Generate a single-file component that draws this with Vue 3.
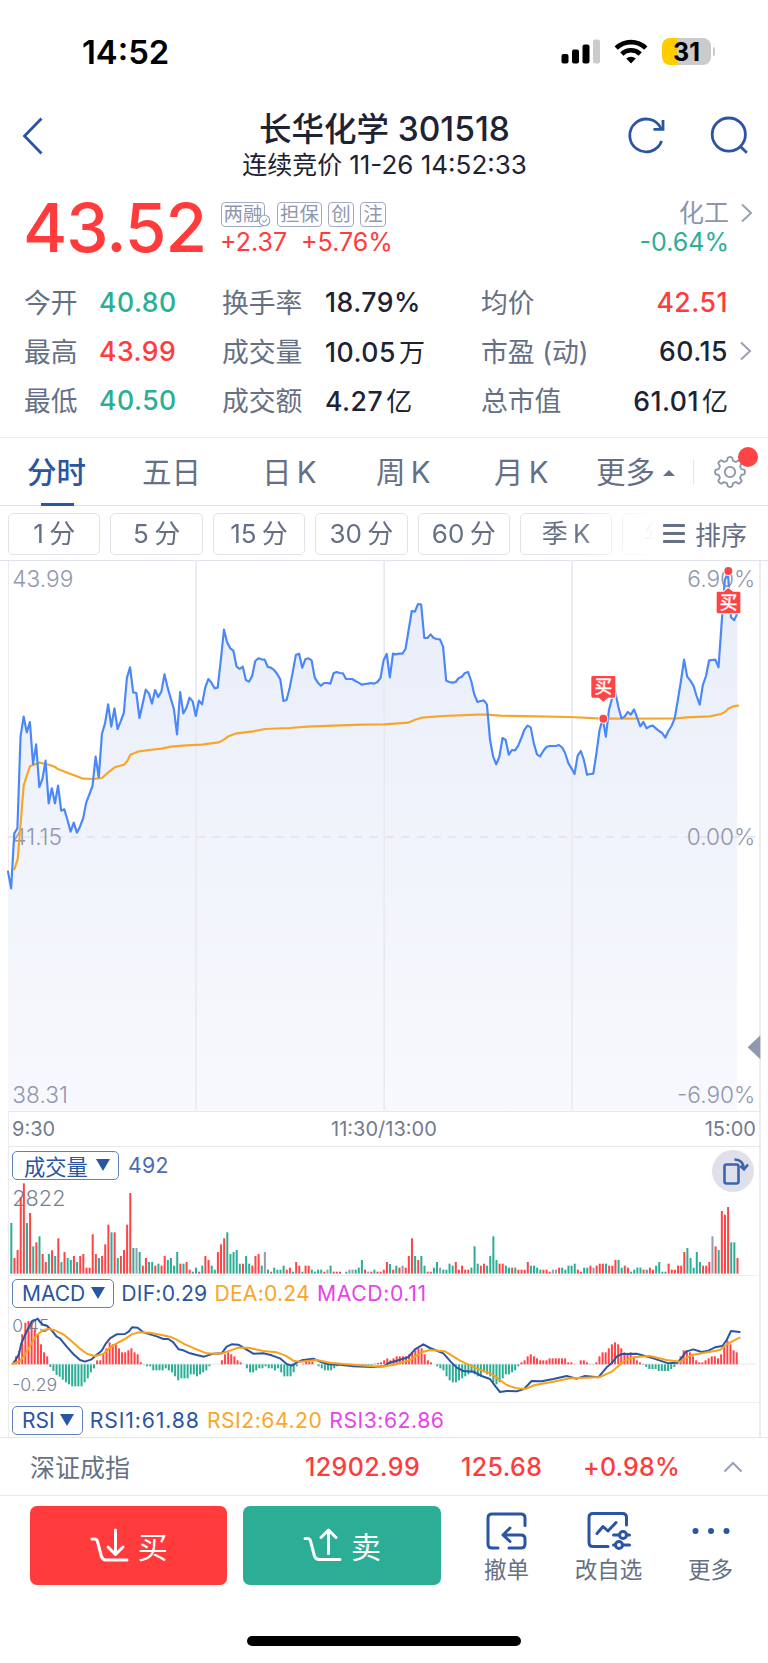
<template>
  <div class="page">
    <!-- status bar -->
    <div class="status">
      <span class="clock">14:52</span>
      <div class="status-icons">
        <svg width="40" height="26" viewBox="0 0 40 26">
          <rect x="0.5" y="15" width="7" height="9.5" rx="2" />
          <rect x="11" y="10.5" width="7" height="14" rx="2" />
          <rect x="21.5" y="5.5" width="7" height="19" rx="2" />
          <rect x="32" y="0.5" width="7" height="24" rx="2" fill="#cbcbcb" />
        </svg>
        <svg class="wifi" width="34" height="26" viewBox="0 0 34 26" fill="none" stroke="#000" stroke-width="4.6">
          <path d="M2.2 9.2 A21 21 0 0 1 31.8 9.2" />
          <path d="M7.8 15 A13.2 13.2 0 0 1 26.2 15" />
          <path d="M17 24.6 L12.2 19.6 A7 7 0 0 1 21.8 19.6 Z" fill="#000" stroke="none" />
        </svg>
        <div class="battery"><span class="battery-num">31</span></div>
        <i class="battery-tip"></i>
      </div>
    </div>

    <!-- title -->
    <header class="header">
      <svg class="back" width="22" height="38" viewBox="0 0 22 38"><path d="M19.5 1.5 L2.5 19 L19.5 36.5" /></svg>
      <div class="titles">
        <div class="title">长华化学 <span>301518</span></div>
        <div class="subtitle">连续竞价 <span>11-26 14:52:33</span></div>
      </div>
      <div class="header-actions">
        <svg width="40" height="40" viewBox="0 0 40 40">
          <path d="M34.6 25 A16.4 16.4 0 1 1 34 12.5" />
          <path d="M36 4 V13.3 H26.5" />
        </svg>
        <svg width="40" height="40" viewBox="0 0 40 40">
          <circle cx="18.8" cy="18.6" r="16.6" />
          <path d="M30.5 30.5 L36.8 36.8" />
        </svg>
      </div>
    </header>

    <!-- quote -->
    <section class="quote">
      <div class="price">43.52</div>
      <div class="quote-mid">
        <div class="tags">
          <span class="tag checked">两融
            <svg class="tick" width="13" height="13" viewBox="0 0 13 13"><circle cx="6.5" cy="6.5" r="5.3" /><path d="M4 6.4 L6 8.3 L9.2 5" /></svg>
          </span>
          <span class="tag wide">担保</span>
          <span class="tag">创</span>
          <span class="tag">注</span>
        </div>
        <div class="change up"><span>+2.37</span><span>+5.76%</span></div>
      </div>
      <div class="sector">
        <div class="sector-name">化工</div>
        <div class="sector-rate down">-0.64%</div>
      </div>
      <svg class="arrow sector-arrow" width="14" height="20" viewBox="0 0 14 20"><path d="M2 1.5 L11 10 L2 18.5" /></svg>
    </section>

    <section class="stats">
      <div class="stat-row" v-for="row in stats" :key="row[0].label">
        <template v-for="cell in row" :key="cell.label">
          <span class="label">{{ cell.label }}</span>
          <span class="value" :class="cell.tone">{{ cell.value }}<em v-if="cell.unit">{{ cell.unit }}</em></span>
        </template>
        <svg v-if="row[2].more" class="arrow" width="14" height="20" viewBox="0 0 14 20"><path d="M2 1.5 L11 10 L2 18.5" /></svg>
      </div>
    </section>

    <!-- period tabs -->
    <nav class="tabs">
      <span v-for="(tab, i) in tabs" :key="tab" class="tab" :class="{ active: i === 0 }">{{ tab }}</span>
      <span class="tab more">更多<i class="caret"></i></span>
      <i class="tab-sep"></i>
      <div class="gear">
        <svg width="36" height="36" viewBox="-18 -18 36 36"><path :d="gearPath" /><circle r="5.2" /></svg>
        <i class="dot"></i>
      </div>
    </nav>

    <div class="chips">
      <div class="chip-list">
        <span v-for="chip in chips" :key="chip" class="chip">{{ chip }}</span>
      </div>
      <div class="sort">
        <i class="burger"></i>
        <span>排序</span>
      </div>
    </div>

    <section class="charts">
      <!-- price, drawn at 3 units per pixel -->
      <svg class="plot" width="768" height="551" viewBox="0 0 2304 1653">
        <defs>
          <linearGradient id="area" x1="0" y1="0" x2="0" y2="1653" gradientUnits="userSpaceOnUse">
            <stop offset="0" stop-color="#e8edf9" />
            <stop offset="0.55" stop-color="#f1f4fb" />
            <stop offset="1" stop-color="#f8f9fe" />
          </linearGradient>
        </defs>
        <path :d="areaPath" fill="url(#area)" />
        <path class="grid-line" d="M588.5 0 V1650 M1152.5 0 V1650 M1716.5 0 V1650" />
        <path class="zero-dash" d="M24 831 H2268" />
        <g class="axis">
          <text x="37" y="81">43.99</text>
          <text x="37" y="855">41.15</text>
          <text x="37" y="1628">38.31</text>
          <text x="2266" y="81" text-anchor="end">6.90%</text>
          <text x="2266" y="855" text-anchor="end">0.00%</text>
          <text x="2266" y="1628" text-anchor="end">-6.90%</text>
        </g>
        <polyline :points="avgPoints" class="line avg" />
        <polyline :points="pricePoints" class="line price-line" />
        <g class="buy">
          <circle cx="1810" cy="476" r="12" />
          <path d="M1778 348 H1842 Q1846 348 1846 352 V409 Q1846 413 1842 413 H1824 L1810 425 L1796 413 H1778 Q1774 413 1774 409 V352 Q1774 348 1778 348 Z" />
          <text x="1810" y="400">买</text>
          <circle cx="2185" cy="33" r="12" />
          <path d="M2154 95 H2171 L2185 84 L2199 95 H2217 Q2221 95 2221 99 V156 Q2221 160 2217 160 H2154 Q2150 160 2150 156 V99 Q2150 95 2154 95 Z" />
          <text x="2186" y="147">买</text>
        </g>
        <path d="M2281 1426 V1498 L2243 1462 Z" fill="#8f99ab" />
      </svg>
      <div class="times"><span>9:30</span><span class="noon">11:30/13:00</span><span>15:00</span></div>

      <!-- volume -->
      <div class="ind-head volume-head">
        <span class="pill cn">成交量<i class="tri"></i></span>
        <span class="c-dif vol-now">492</span>
      </div>
      <svg class="plot" width="768" height="95" viewBox="0 300 2304 285">
        <text class="axis-dark" x="37" y="377">2822</text>
        <rect v-for="(bar, i) in volumeBars" :key="i" :x="bar.x" :y="581 - bar.h" width="6" :height="bar.h" :fill="bar.color" />
      </svg>

      <!-- macd -->
      <div class="ind-head macd-head">
        <span class="pill">MACD<i class="tri"></i></span>
        <span class="c-dif">DIF:0.29</span>
        <span class="c-dea">DEA:0.24</span>
        <span class="c-macd">MACD:0.11</span>
      </div>
      <svg class="plot" width="768" height="92" viewBox="0 690 2304 276">
        <path d="M24 852 H2268" stroke="#e6e8ee" stroke-width="3" />
        <rect v-for="(bar, i) in macdBars" :key="i" :x="bar.x" :y="bar.y" width="6" :height="bar.h" :fill="bar.color" />
        <text class="axis-dark small" x="37" y="757">0.45</text>
        <text class="axis-dark small" x="37" y="934">-0.29</text>
        <polyline :points="difPoints" class="line dif" />
        <polyline :points="deaPoints" class="line dea" />
      </svg>

      <div class="ind-head rsi-head">
        <span class="pill">RSI<i class="tri"></i></span>
        <span class="c-dif">RSI1:61.88</span>
        <span class="c-dea">RSI2:64.20</span>
        <span class="c-macd">RSI3:62.86</span>
      </div>

      <div class="rotate">
        <svg width="42" height="42" viewBox="0 0 42 42">
          <rect x="12.5" y="14.5" width="14" height="19" rx="2" />
          <path d="M22.5 9.5 C28 9.5 31.5 13 32 19 M28.3 16 L32 19.3 L36 14.5" />
        </svg>
      </div>
    </section>

    <!-- index ticker -->
    <div class="index-bar">
      <span class="index-name">深证成指</span>
      <span class="index-num">12902.99</span>
      <span class="index-diff">125.68</span>
      <span class="index-rate">+0.98%</span>
      <svg class="arrow" width="20" height="14" viewBox="0 0 20 14"><path d="M1.5 11.5 L10 3 L18.5 11.5" /></svg>
    </div>

    <!-- trade bar -->
    <footer class="trade">
      <div class="btn buy-btn">
        <svg width="40" height="36" viewBox="0 0 40 36"><path d="M2 11 H4.5 Q6.8 11 7.5 13.5 L11.3 28 Q12.5 32 16 32 H37" /><path d="M25.5 2 V26 M18 19 L25.5 26.5 L33 19" /></svg>
        <span>买</span>
      </div>
      <div class="btn sell-btn">
        <svg width="40" height="36" viewBox="0 0 40 36"><path d="M2 10.5 H4.5 Q6.8 10.5 7.5 13 L11.3 27.5 Q12.5 31.5 16 31.5 H37" /><path d="M25.5 25.5 V2.5 M18 9.5 L25.5 2 L33 9.5" /></svg>
        <span>卖</span>
      </div>
      <div class="tool cancel">
        <svg width="42" height="40" viewBox="0 0 42 40">
          <path d="M39 14.5 V7 Q39 3 35 3 H6 Q2 3 2 7 V33 Q2 37 6 37 H12" />
          <path d="M23 37 H35 Q39 37 39 33 V28 Q39 24 35 24 H18 M24 17 L17 24 L24 30.5" />
        </svg>
        <span>撤单</span>
      </div>
      <div class="tool watch">
        <svg width="46" height="40" viewBox="0 0 46 40">
          <path d="M40.5 14 V6.5 Q40.5 2.5 36.5 2.5 H7 Q3 2.5 3 6.5 V31.5 Q3 35.5 7 35.5 H22" />
          <path d="M11 22.5 L17 15.5 L22 20 L30 11.5" />
          <path d="M27.5 24 H33.5 M40.5 24 H43.5 M27.5 34 H29.5 M36.5 34 H43.5" />
          <circle cx="37" cy="24" r="3.5" /><circle cx="33" cy="34" r="3.5" />
        </svg>
        <span>改自选</span>
      </div>
      <div class="tool others">
        <svg width="42" height="40" viewBox="0 0 42 40"><g class="dots"><circle cx="5.5" cy="20" r="3" /><circle cx="21" cy="20" r="3" /><circle cx="36.5" cy="20" r="3" /></g></svg>
        <span>更多</span>
      </div>
    </footer>
    <div class="home"></div>
  </div>
</template>

<script setup>
const stats = [
  [
    { label: '今开', value: '40.80', tone: 'down' },
    { label: '换手率', value: '18.79%' },
    { label: '均价', value: '42.51', tone: 'up' },
  ],
  [
    { label: '最高', value: '43.99', tone: 'up' },
    { label: '成交量', value: '10.05', unit: '万' },
    { label: '市盈 (动)', value: '60.15', more: true },
  ],
  [
    { label: '最低', value: '40.50', tone: 'down' },
    { label: '成交额', value: '4.27', unit: '亿' },
    { label: '总市值', value: '61.01', unit: '亿' },
  ],
]
const tabs = ['分时', '五日', '日 K', '周 K', '月 K']
const chips = ['1 分', '5 分', '15 分', '30 分', '60 分', '季 K', '年 K']

// one value per minute, vertical position in the plot
const price = [
  935, 985, 820, 805, 530, 470, 517, 486, 612, 553, 681, 657, 602, 730, 685, 730, 677, 752, 748, 780,
  815, 788, 818, 800, 775, 727, 703, 678, 590, 652, 522, 490, 433, 500, 445, 507, 484, 459, 353, 322,
  397, 399, 474, 432, 389, 400, 431, 390, 411, 395, 343, 383, 416, 447, 523, 396, 460, 444, 413, 424,
  468, 422, 433, 383, 357, 368, 385, 383, 300, 209, 247, 265, 272, 319, 327, 320, 360, 365, 348, 303,
  295, 298, 299, 321, 323, 330, 342, 358, 423, 420, 383, 335, 284, 281, 323, 298, 295, 301, 353, 368,
  377, 369, 369, 371, 340, 336, 339, 340, 357, 357, 357, 363, 368, 374, 372, 371, 369, 371, 366, 354,
  301, 282, 352, 281, 283, 281, 281, 267, 210, 153, 155, 132, 134, 234, 234, 223, 234, 237, 238, 260,
  362, 366, 368, 366, 354, 350, 339, 336, 363, 404, 426, 423, 421, 433, 540, 590, 613, 590, 534, 540,
  584, 570, 571, 557, 534, 509, 497, 502, 550, 583, 589, 573, 561, 558, 558, 558, 555, 562, 579, 609,
  625, 642, 587, 573, 600, 644, 642, 641, 580, 510, 476, 530, 450, 415, 397, 440, 475, 470, 456, 464,
  448, 473, 499, 486, 505, 499, 497, 505, 513, 519, 533, 513, 498, 475, 420, 363, 299, 350, 362, 377,
  408, 434, 375, 348, 301, 300, 299, 322, 190, 60, 38, 172, 181, 160,
]
const step = 9.39
const pricePoints = price.map((y, i) => `${(24 + i * step).toFixed(1)},${y}`).join(' ')
const areaPath = `M24 1653 L${pricePoints} V1653 Z`

const avgPoints = '43,928 53,898 62,790 71,677 80,648 90,619 118,608 150,615 165,621 175,628 212,642 250,656 280,657 306,654 325,637 344,622 372,614 382,603 391,584 413,575 447,570 485,566 513,560 560,556 607,554 627,551 657,547 673,538 685,529 710,520 760,514 795,507 870,504 920,500 1000,497 1090,494 1152,493 1225,488 1245,479 1265,473 1330,468 1430,464 1460,464 1500,467 1610,469 1710,471 1790,475 1810,476 2030,475 2060,472 2130,469 2163,462 2175,456 2185,446 2200,439 2214,437'

const RED = '#ff4446'
const GREEN = '#2bae95'
const GREY = '#939cb0'

// r = up, g = down, n = flat
const volume =
  'g152 r47 r71 r230 r271 g152 r182 g82 r94 g112 r59 r35 g59 r70 g53 r106 g35 r65 g47 g41 r53 g35 r53 r59 r18 r18 r118 r59 g47 r53 ' +
  'r88 r147 g124 r124 g47 r53 r71 r147 r242 g77 n77 g65 r24 r47 g35 g35 r24 g30 r24 r53 g41 g47 g24 g65 r30 g30 r35 r12 g6 g18 ' +
  'r6 g24 r53 r41 g24 g12 r65 r88 r106 g124 g59 g65 g71 g30 r30 g53 g30 r24 r53 r59 g24 n65 g12 r6 g18 g12 g12 g24 r12 r18 ' +
  'g6 r35 r24 g6 r24 r24 g12 g6 g12 g12 r6 n12 g24 r6 r6 r6 n0 g6 n12 n12 g12 g18 g41 r12 n6 r6 g12 r6 r6 r12 ' +
  'r35 g29 r12 g24 r18 n24 r18 r53 r106 g53 r41 g53 g24 r6 r6 g18 g35 n18 g12 g12 g30 g24 r35 r12 r24 r12 r12 g18 g82 g30 ' +
  'r24 r30 g24 g53 g112 g41 r30 r30 g24 g18 r18 g18 r12 r12 r12 r35 g24 g24 g18 g12 r12 r12 r6 n12 n12 r18 g18 g12 g24 g24 ' +
  'g30 r12 r6 g18 g18 r24 n18 r24 r30 r30 g30 r24 r24 r41 g41 g18 r24 r18 g6 g12 g18 g18 r12 g12 r18 r12 g24 g35 g6 g6 ' +
  'r30 r12 r12 r24 r24 r65 g77 g47 g18 g65 g35 r24 r24 r35 n112 r82 g71 r188 r177 r200 g94 g94 r47'
const tones = { r: RED, g: GREEN, n: GREY }
const volumeBars = volume.split(' ').map((v, i) => ({
  x: (31 + i * step).toFixed(1),
  h: Number(v.slice(1)),
  color: tones[v[0]],
}))

const macd = [
  24, 40, 90, 125, 130, 130, 105, 90, 60, 36, 24, -8, -20, -32, -37, -46, -54, -60, -66, -66,
  -66, -66, -54, -42, -24, -12, 12, 12, 30, 48, 66, 60, 60, 48, 36, 36, 42, 48, 36, 30,
  6, -1, -6, -6, -18, -18, -18, -18, -12, -18, -24, -36, -48, -42, -42, -42, -30, -30, -36, -30,
  -24, -18, -6, 0, 0, 0, 12, 30, 36, 30, 24, 12, 6, 0, -12, -24, -24, -18, -12, -12,
  -6, -12, -12, -18, -12, -24, -36, -36, -36, -24, -6, 0, 2, 8, 8, 8, 0, -6, -12, -18,
  -18, -18, -12, -6, -2, -2, -2, -3, -3, -2, -2, -3, -3, -4, -2, 2, 4, 6,
  12, 18, 12, 18, 24, 24, 24, 24, 30, 36, 42, 48, 48, 30, 12, 6, 0, -6, -12, -18,
  -36, -48, -54, -54, -48, -42, -36, -30, -24, -30, -36, -36, -24, -30, -36, -54, -60, -54, -42, -30,
  -30, -24, -18, -6, 6, 12, 24, 30, 24, 18, 12, 12, 12, 18, 18, 18, 18, 18, 18, 6,
  6, 1, 0, 12, 12, 6, -1, -1, 6, 24, 36, 36, 48, 60, 66, 60, 48, 36, 30, 36,
  24, 12, 6, -2, -8, -14, -14, -14, -20, -20, -20, -20, -14, -8, 6, 24, 42, 42, 36, 24,
  12, 6, 6, 12, 18, 24, 24, 18, 30, 54, 72, 60, 42, 36,
]
const macdBars = macd.map((v, i) => ({
  x: (45 + i * 9.36).toFixed(1),
  y: v > 0 ? 853 - v : 853,
  h: Math.abs(v),
  color: v > 0 ? RED : GREEN,
}))

const difPoints = '38,852 48,838 57,822 64,790 75,765 87,740 97,722 106,720 113,716 121,727 130,735 141,737 150,746 160,757 170,770 180,775 200,800 220,822 240,840 255,845 275,838 290,824 305,812 318,790 330,775 350,763 375,762 387,754 396,742 413,743 430,757 450,763 470,769 490,777 505,777 520,787 536,808 550,811 570,820 590,825 612,830 640,821 665,820 680,800 695,793 715,794 735,806 760,821 790,820 815,826 840,835 860,852 875,857 890,848 905,841 940,836 965,847 985,853 1020,854 1060,859 1120,861 1152,859 1168,848 1190,842 1224,832 1245,808 1270,793 1290,804 1330,820 1352,845 1370,863 1390,873 1420,875 1445,888 1470,897 1487,920 1500,936 1520,933 1550,934 1572,927 1595,903 1625,904 1660,897 1700,888 1730,896 1755,888 1795,892 1820,862 1835,850 1850,830 1865,822 1910,821 1960,835 2005,850 2030,848 2042,838 2058,815 2080,808 2105,816 2125,812 2145,802 2167,798 2180,780 2193,753 2219,756'
const deaPoints = '38,852 60,843 75,825 90,798 110,765 130,750 147,747 165,751 190,763 215,784 240,806 262,822 285,828 310,822 330,803 350,790 375,777 395,763 415,757 450,758 480,764 510,770 530,779 555,793 590,808 620,820 660,822 690,812 715,803 745,803 790,813 830,817 855,826 880,842 900,845 950,840 990,848 1030,852 1080,856 1140,860 1180,855 1230,840 1265,817 1290,810 1335,814 1380,842 1430,865 1475,882 1520,915 1550,925 1575,927 1605,915 1660,905 1710,895 1760,893 1800,891 1835,875 1870,845 1900,832 1950,828 2000,840 2040,845 2075,825 2110,819 2160,810 2185,790 2219,773'

// eight-tooth cog outline
const gearPath = (() => {
  const pts = []
  for (let a = 0; a < 360; a += 2) {
    const t = (a * Math.PI) / 180
    const r = 13.2 + 1.7 * Math.tanh(2.6 * Math.cos(8 * t))
    pts.push(`${(r * Math.cos(t)).toFixed(2)} ${(r * Math.sin(t)).toFixed(2)}`)
  }
  return `M${pts.join(' L')} Z`
})()
</script>

<style>
body {
  background: #fff;
}
</style>

<style scoped>
.page {
  width: 768px;
  height: 1663px;
  overflow: hidden;
  background: #fff;
  font-family: Inter, "Noto Sans CJK SC", sans-serif;
  color: #1e2333;
}

.page svg {
  display: block;
  flex: none;
}

.up {
  color: #ff3b3b;
}

.down {
  color: #2bae95;
}

/* status bar */
.status {
  display: flex;
  justify-content: space-between;
  height: 100px;
  padding: 0 53px 0 82px;
  color: #000;
}

.clock {
  margin-top: 32px;
  font-size: 32.8px;
  font-weight: 600;
  line-height: 40px;
}

.status-icons {
  display: flex;
  padding-top: 39px;
}

.wifi {
  margin-left: 13px;
}

.battery {
  width: 49px;
  height: 27px;
  margin: -1px 0 0 14px;
  border-radius: 8px;
  background: linear-gradient(90deg, #ffcc00 31%, #cbcbcb 31%);
  text-align: center;
}

.battery-num {
  font-size: 25px;
  font-weight: 700;
  line-height: 28px;
}

.battery-tip {
  width: 2px;
  height: 9px;
  margin: 8px 0 0 2px;
  border-radius: 0 3px 3px 0;
  background: #cbcbcb;
}

/* title */
.header {
  display: flex;
  height: 90px;
  padding: 0 18px 0 22px;
}

.header svg {
  fill: none;
  stroke: #2a55a2;
  stroke-width: 2.8;
}

.back {
  margin-top: 17px;
}

.titles {
  flex: 1;
  padding: 8px 0 0 98px;
  text-align: center;
  white-space: nowrap;
}

.title {
  font-size: 32.5px;
  font-weight: 500;
  line-height: 42px;
}

.title span {
  font-size: 33.5px;
}

.subtitle {
  margin-top: -1px;
  font-size: 25px;
  line-height: 30px;
}

.subtitle span {
  font-size: 26px;
}

.header-actions {
  display: flex;
  gap: 43px;
  padding-top: 16px;
}

/* quote */
.quote {
  display: flex;
  height: 87px;
  padding: 0 14px 0 23px;
}

.price {
  width: 198px;
  margin-top: -2px;
  color: #ff3b3b;
  font-size: 67.5px;
  font-weight: 500;
  letter-spacing: -1px;
  line-height: 80px;
}

.tags {
  display: flex;
  gap: 6px;
  margin-top: 12px;
}

.tag {
  box-sizing: border-box;
  width: 26px;
  height: 25px;
  border: 1px solid #a3a9c2;
  border-radius: 4px;
  color: #9197b0;
  font-size: 19.5px;
  line-height: 23px;
  text-align: center;
  white-space: nowrap;
}

.tag.wide {
  width: 45px;
}

.tag.checked {
  position: relative;
  width: 44px;
  margin-right: 6px;
}

.tick {
  position: absolute;
  right: -7px;
  bottom: -1px;
  fill: #fff;
  stroke: #9aa1bb;
  stroke-width: 1.1;
}

.change {
  display: flex;
  gap: 14px;
  margin-left: -1px;
  font-size: 25px;
  line-height: 30px;
}

.sector {
  flex: 1;
  text-align: right;
}

.sector-name {
  margin-top: 5px;
  color: #8d94ab;
  font-size: 25px;
  line-height: 37px;
}

.sector-rate {
  font-size: 25px;
  line-height: 30px;
  margin-top: -5px;
}

.arrow {
  fill: none;
  stroke: #9aa1b5;
  stroke-width: 2;
}

.sector-arrow {
  margin: 13px 0 0 11px;
}

.stats {
  height: 160px;
  border-bottom: 1px solid #ececf1;
}

.stat-row {
  display: grid;
  grid-template-columns: 75px 123px 103px 156px 106px 141px 14px;
  align-items: center;
  height: 49px;
  padding-left: 24px;
  white-space: nowrap;
}

.stat-row .arrow {
  margin-left: 11px;
}

.label {
  color: #667085;
  font-size: 26.8px;
}

.value {
  font-size: 26.6px;
  font-weight: 500;
  letter-spacing: 0.5px;
}

.value:nth-of-type(6) {
  text-align: right;
}

.value em {
  margin-left: 3px;
  font-size: 26px;
  font-style: normal;
  font-weight: 400;
  letter-spacing: 0;
}

/* tabs */
.tabs {
  display: flex;
  align-items: center;
  height: 67px;
  border-bottom: 1px solid #dfe1ec;
  padding-left: 27px;
  color: #667085;
  font-size: 29.5px;
  white-space: nowrap;
  word-spacing: -3px;
}

.tab {
  position: relative;
  width: 115px;
  padding-top: 2px;
  line-height: 65px;
}

.tab:nth-child(2) {
  width: 120px;
}

.tab:nth-child(3) {
  width: 114px;
}

.tab:nth-child(4) {
  width: 118px;
}

.tab:nth-child(5) {
  width: 102px;
}

.tab.active {
  color: #2a55a2;
  font-weight: 500;
}

.tab.active::after {
  content: "";
  position: absolute;
  left: 14px;
  bottom: -1px;
  width: 33px;
  height: 3px;
  background: #2a55a2;
}

.tab.more {
  display: flex;
  align-items: center;
  width: 97px;
}

.caret {
  margin-left: 8px;
  border: 6px solid transparent;
  border-top: 0;
  border-bottom: 6px solid #667085;
}

.tab-sep {
  width: 1px;
  height: 24px;
  background: #e4e6ec;
}

.gear {
  position: relative;
  margin-left: 18px;
}

.gear svg {
  fill: none;
  stroke: #8a93a8;
  stroke-width: 1.8;
}

.dot {
  position: absolute;
  top: -7px;
  right: -10px;
  width: 20px;
  height: 20px;
  border-radius: 50%;
  background: #ff4446;
}

/* chips */
.chips {
  display: flex;
  height: 54px;
  border-bottom: 1px solid #e0e2ec;
}

.chip-list {
  display: flex;
  gap: 10px;
  width: 653px;
  padding: 7px 0 0 8px;
  overflow: hidden;
  -webkit-mask-image: linear-gradient(90deg, #000 575px, transparent 654px);
  mask-image: linear-gradient(90deg, #000 575px, transparent 654px);
}

.chip {
  box-sizing: border-box;
  flex: none;
  width: 92.4px;
  height: 41.5px;
  border: 1px solid #e0e2ea;
  border-radius: 5px;
  color: #667085;
  font-size: 26px;
  line-height: 40px;
  text-align: center;
  word-spacing: -2px;
}

.sort {
  display: flex;
  align-items: center;
  margin-left: 2px;
  color: #667085;
  font-size: 26px;
}

.burger {
  width: 22px;
  height: 3px;
  margin-right: 10px;
  border-radius: 1px;
  background: #667085;
  box-shadow: 0 8px #667085, 0 -8px #667085;
}

/* charts */
.charts {
  position: relative;
  height: 877px;
  margin-top: -1px;
  border-bottom: 1px solid #e4e6ec;
}

.charts::before {
  content: "";
  position: absolute;
  inset: 1px 7px 0 8px;
  border: solid #ececf0;
  border-width: 0 2px 0 1px;
  pointer-events: none;
}

.plot {
  position: relative;
}

.grid-line {
  stroke: #e9eaf0;
  stroke-width: 5;
}

.zero-dash {
  stroke: #dfe1ea;
  stroke-width: 4.5;
  stroke-dasharray: 24 23.2;
}

.axis text {
  fill: #9197ae;
  font-size: 68px;
  font-weight: 300;
}

.axis-dark {
  fill: #787f92;
  font-size: 65px;
  font-weight: 300;
}

.axis-dark.small {
  font-size: 53px;
}

.line {
  fill: none;
  stroke-width: 6;
  stroke-linejoin: round;
  stroke-linecap: round;
}

.price-line {
  stroke: #4a87f8;
  stroke-width: 6.5;
}

.avg {
  stroke: #f7a62b;
  stroke-width: 6.5;
}

.dif {
  stroke: #2a55a2;
}

.dea {
  stroke: #f9a11b;
}

.buy circle,
.buy path {
  fill: #ff4446;
  stroke: #fff;
  stroke-width: 6;
  paint-order: stroke;
}

.buy text {
  fill: #fff;
  stroke: #fff;
  stroke-width: 1.5;
  font-size: 53px;
  text-anchor: middle;
}

.times {
  position: relative;
  display: flex;
  justify-content: space-between;
  box-sizing: border-box;
  height: 36px;
  margin: 0 7px 0 8px;
  padding: 0 5px 0 4px;
  border: solid #e6e8ee;
  border-width: 1px 0;
  color: #737b8e;
  font-size: 20px;
  line-height: 34px;
}

.noon {
  margin-left: 8px;
}

.ind-head {
  position: relative;
  display: flex;
  align-items: center;
  box-sizing: border-box;
  margin: 0 7px 0 8px;
  padding-left: 4px;
  font-size: 21.2px;
  white-space: nowrap;
}

.volume-head {
  height: 33px;
  padding-top: 3px;
}

.macd-head {
  height: 35px;
  border-top: 1px solid #eceef2;
  letter-spacing: 0.2px;
}

.macd-head .c-macd {
  letter-spacing: 0.6px;
}

.rsi-head {
  height: 35px;
  border-top: 1px solid #eceef2;
  letter-spacing: 0.5px;
}

.rsi-head .c-dif {
  letter-spacing: 0.9px;
}

.pill {
  display: flex;
  align-items: center;
  box-sizing: border-box;
  height: 29px;
  padding: 0 8px 0 9px;
  margin-right: 7px;
  border: 1px solid #5f82bf;
  border-radius: 5px;
  color: #2a55a2;
  font-size: 21px;
  letter-spacing: 0;
}

.pill.cn {
  padding: 0 8px 0 11px;
  margin-right: 9px;
  font-size: 21.3px;
}

.tri {
  margin-left: 6px;
  border: 7.5px solid transparent;
  border-top: 12px solid #2a55a2;
  border-bottom: 0;
}

.pill.cn .tri {
  margin-left: 8px;
}

.rsi-head .tri {
  margin-left: 5px;
}

.c-dif {
  color: #2a55a2;
  margin-right: 7px;
}

.vol-now {
  color: #4a6cb0;
  letter-spacing: 0.4px;
}

.c-dea {
  color: #f9a62b;
  margin-right: 7px;
}

.c-macd {
  color: #e743e8;
}

.rotate {
  position: absolute;
  top: 590px;
  left: 712px;
  width: 42px;
  height: 42px;
  border-radius: 50%;
  background: #dfe0e9;
}

.rotate svg {
  fill: none;
  stroke: #3c65ae;
  stroke-width: 2.6;
}

/* index ticker */
.index-bar {
  display: flex;
  align-items: center;
  height: 57px;
  padding-left: 30px;
  border-bottom: 1px solid #e8e9f0;
  color: #ff3b3b;
  font-size: 25px;
  font-weight: 500;
  letter-spacing: 0.4px;
}

.index-name {
  width: 275px;
  margin-top: -2px;
  color: #667085;
  font-weight: 400;
  letter-spacing: 0;
}

.index-num {
  width: 156px;
}

.index-diff {
  width: 122px;
}

.index-rate {
  width: 140px;
  letter-spacing: 0.2px;
}

/* trade bar */
.trade {
  display: flex;
  align-items: flex-start;
  height: 130px;
  padding: 10px 0 0 30px;
}

.btn {
  display: flex;
  align-items: center;
  justify-content: center;
  width: 197.3px;
  height: 79px;
  margin-right: 16px;
  border-radius: 7px;
  color: #fff;
  font-size: 30px;
}

.btn span {
  margin-top: -2px;
}

.btn svg {
  margin-right: 8px;
  fill: none;
  stroke: #fff;
  stroke-width: 3;
  stroke-linecap: round;
  stroke-linejoin: round;
}

.buy-btn {
  background: #ff3b3b;
}

.sell-btn {
  background: #2bae95;
}

.tool {
  display: flex;
  flex-direction: column;
  align-items: center;
  padding-top: 5px;
  color: #667085;
  font-size: 22.5px;
  line-height: 30px;
}

.tool svg {
  margin-bottom: 4px;
  fill: none;
  stroke: #2a55a2;
  stroke-width: 3;
  stroke-linecap: round;
  stroke-linejoin: round;
}

.tool .dots {
  fill: #2a55a2;
  stroke: none;
}

.cancel {
  width: 98px;
  margin-left: 1px;
}

.watch {
  width: 106px;
}

.others {
  width: 98px;
}

.home {
  width: 274px;
  height: 10px;
  margin-left: 247px;
  border-radius: 5px;
  background: #000;
}
</style>
